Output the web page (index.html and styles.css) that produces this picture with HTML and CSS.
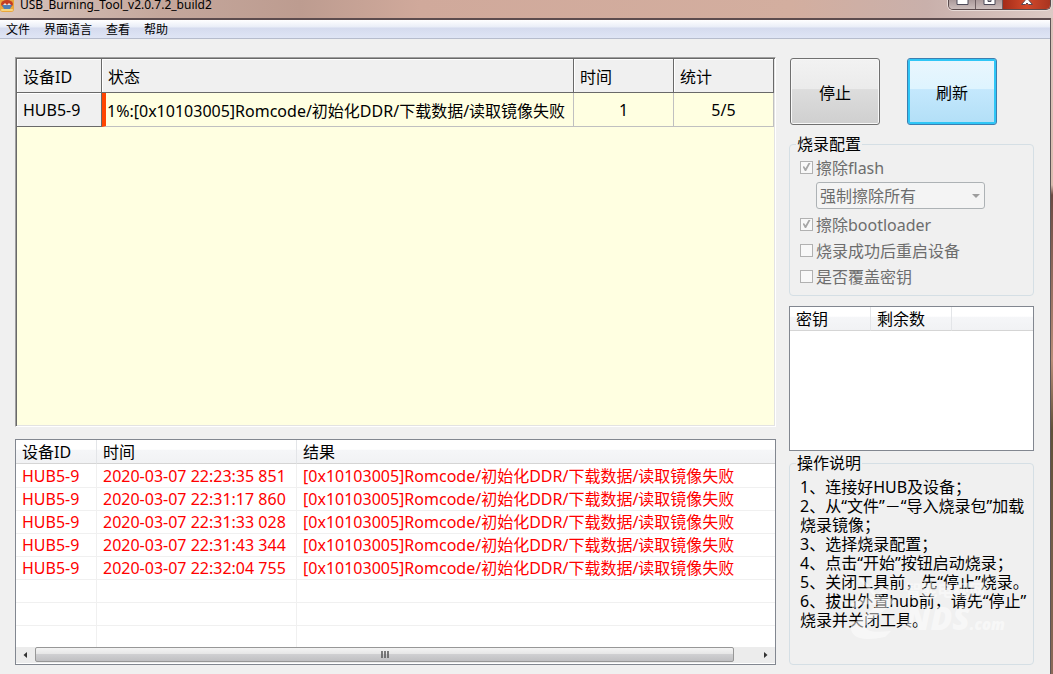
FILE: index.html
```
<!DOCTYPE html>
<html lang="zh-CN">
<head>
  <meta charset="UTF-8" />
  <meta name="viewport" content="width=device-width, initial-scale=1.0"/>
  <title>USB_Burning_Tool_v2.0.7.2_build2</title>
  <link rel="stylesheet" href="styles.css">
</head>
<body>

  <header class="titlebar">
    <svg class="app-icon" width="14" height="13" viewBox="0 0 14 13">
      <rect x="0" y="-3" width="14" height="15" rx="3" fill="#e9a63c"/>
      <rect x="1" y="9" width="12" height="2" rx="1" fill="#f7d47e"/>
      <ellipse cx="7" cy="4" rx="6" ry="4" fill="#c43c22"/>
      <path d="M2 5h10l-2 4H4z" fill="#4f7fb5"/>
      <path d="M3 5l2-2 2 2 2-2 2 2z" fill="#f3e3d4"/>
    </svg>
    <span class="title">USB_Burning_Tool_v2.0.7.2_build2</span>
    <div class="window-btns">
      <button class="win-btn" aria-label="最小化">
        <svg width="13" height="6" viewBox="0 0 13 6"><path d="M1 0v4.500h11V0" fill="#fff" stroke="#4d4a58"/></svg>
      </button>
      <button class="win-btn" aria-label="最大化">
        <svg width="13" height="6" viewBox="0 0 13 6"><path d="M1 -1v5.500h11V-1z" fill="#fff" stroke="#4d4a58"/><path d="M5 -1v2.500h3V-1z" fill="#aaa" stroke="#4d4a58"/></svg>
      </button>
      <button class="win-btn close" aria-label="关闭">
        <svg width="14" height="6" viewBox="0 0 14 6"><path d="M5 -1h4v1.500L12.500 4.500h-4L7 3 5.500 4.500h-4L5 0.500z" fill="#fff" stroke="#5b4650"/></svg>
      </button>
    </div>
  </header>

  <div class="window">
    <nav class="menubar">
      <button>文件</button>
      <button>界面语言</button>
      <button>查看</button>
      <button>帮助</button>
    </nav>

    <main class="content">
      <div class="left">
        <div class="device-panel">
          <table class="device-table">
            <colgroup><col class="col-hub"><col><col class="col-num"><col class="col-num"></colgroup>
            <thead>
              <tr><th>设备ID</th><th>状态</th><th>时间</th><th>统计</th></tr>
            </thead>
            <tbody>
              <tr>
                <th>HUB5-9</th>
                <td class="status">1%:[0x10103005]Romcode/初始化DDR/下载数据/读取镜像失败</td>
                <td class="num">1</td>
                <td class="num">5/5</td>
              </tr>
            </tbody>
          </table>
        </div>

        <div class="log-panel">
          <div class="log-scroll">
            <table class="log-table">
              <colgroup><col class="col-id"><col class="col-time"><col></colgroup>
              <thead>
                <tr><th>设备ID</th><th>时间</th><th>结果</th></tr>
              </thead>
              <tbody>
                <tr><td>HUB5-9</td><td>2020-03-07 22:23:35 851</td><td>[0x10103005]Romcode/初始化DDR/下载数据/读取镜像失败</td></tr>
                <tr><td>HUB5-9</td><td>2020-03-07 22:31:17 860</td><td>[0x10103005]Romcode/初始化DDR/下载数据/读取镜像失败</td></tr>
                <tr><td>HUB5-9</td><td>2020-03-07 22:31:33 028</td><td>[0x10103005]Romcode/初始化DDR/下载数据/读取镜像失败</td></tr>
                <tr><td>HUB5-9</td><td>2020-03-07 22:31:43 344</td><td>[0x10103005]Romcode/初始化DDR/下载数据/读取镜像失败</td></tr>
                <tr><td>HUB5-9</td><td>2020-03-07 22:32:04 755</td><td>[0x10103005]Romcode/初始化DDR/下载数据/读取镜像失败</td></tr>
                <tr><td></td><td></td><td></td></tr>
                <tr><td></td><td></td><td></td></tr>
                <tr><td></td><td></td><td></td></tr>
              </tbody>
            </table>
          </div>
          <div class="scrollbar">
            <button class="arrow" aria-label="向左滚动"><svg width="5" height="8" viewBox="0 0 5 8"><path d="M4 1v6L0.500 4z" fill="#333"/></svg></button>
            <div class="track">
              <div class="thumb"><svg width="8" height="7" viewBox="0 0 8 7"><path d="M1 0v7M4 0v7M7 0v7" stroke="#555" stroke-width="1.500"/></svg></div>
            </div>
            <button class="arrow" aria-label="向右滚动"><svg width="5" height="8" viewBox="0 0 5 8"><path d="M1 1v6l3.500-3z" fill="#333"/></svg></button>
          </div>
        </div>
      </div>

      <aside class="right">
        <div class="actions">
          <button class="btn">停止</button>
          <button class="btn focus">刷新</button>
        </div>

        <fieldset class="group config">
          <legend>烧录配置</legend>
          <label class="check"><input type="checkbox" checked disabled>擦除flash</label>
          <div class="select-wrap">
            <select aria-label="擦除方式" disabled>
              <option>强制擦除所有</option>
            </select>
            <svg class="caret" width="8" height="4" viewBox="0 0 8 4"><path d="M0 0h8L4 4z" fill="#9d9d9d"/></svg>
          </div>
          <label class="check"><input type="checkbox" checked disabled>擦除bootloader</label>
          <label class="check"><input type="checkbox" disabled>烧录成功后重启设备</label>
          <label class="check"><input type="checkbox" disabled>是否覆盖密钥</label>
        </fieldset>

        <div class="key-panel">
          <table class="key-table">
            <colgroup><col class="col-key"><col class="col-key"><col></colgroup>
            <thead>
              <tr><th>密钥</th><th>剩余数</th><th></th></tr>
            </thead>
          </table>
        </div>

        <fieldset class="group help">
          <legend>操作说明</legend>
          <p>1、连接好HUB及设备；</p>
          <p>2、从“文件”－“导入烧录包”加载烧录镜像；</p>
          <p>3、选择烧录配置；</p>
          <p>4、点击“开始”按钮启动烧录；</p>
          <p>5、关闭工具前，先“停止”烧录。</p>
          <p>6、拔出外置hub前，请先“停止”烧录并关闭工具。</p>
          <div class="watermark">
            <svg class="mark-logo" width="60" height="66" viewBox="0 0 60 66">
              <path d="M15 2l16 18M46 10L32 20" fill="none" stroke="#fff" stroke-width="3"/>
              <path d="M6 28q22-12 46-4L20 50q0 8 26 5l-6 6Q4 68 6 49l27-20q-20-3-25 5z" fill="#fff"/>
            </svg>
            <div class="mark-text">
              <span class="mark-cn">智能电视网</span>
              <span class="mark-en">NDS<small>.com</small></span>
            </div>
          </div>
        </fieldset>
      </aside>
    </main>
  </div>

</body>
</html>
```
FILE: styles.css
```
* {
  box-sizing: border-box;
}

body {
  margin: 0;
  height: 100vh;
  display: flex;
  flex-direction: column;
  overflow: hidden;
  background: linear-gradient(#d9c4bc 0, #d9bcae 185px, #6b4a42 195px, #b98e78 360px, #5f5038 430px, #8c6a58 100%);
  color: #000;
  font-family: "Noto Sans", "Noto Sans CJK SC", sans-serif;
  font-size: 16px;
}

button, select {
  font-family: inherit;
  color: inherit;
}

/* title bar */
.titlebar {
  flex: none;
  display: flex;
  align-items: flex-start;
  height: 18px;
  padding-right: 2px;
  background: linear-gradient(90deg, #d8c5bd 0, #c4a79c 160px, #bd9c90 300px, #d0a99b 420px, #d3ae9f 75%, #c9b0ab 88%, #dccac5 100%);
}

.title {
  flex: 1;
  padding-left: 6px;
  font-size: 12px;
  line-height: 10px;
}

.window-btns {
  display: flex;
  border: 1px solid #5a4a4c;
  border-top: 0;
  border-radius: 0 0 5px 5px;
  box-shadow: 0 0 0 1px #e9dcd8;
  overflow: hidden;
}

.win-btn {
  display: flex;
  justify-content: center;
  align-items: flex-start;
  width: 27px;
  height: 9px;
  padding: 0;
  border: 0;
  border-right: 1px solid #6d5e61;
  background: linear-gradient(#ab9a9b, #cbbdbb);
}

.win-btn.close {
  width: 47px;
  border-right: 0;
  background: linear-gradient(90deg, #a52c18, #d2492b 50%, #a93420);
}

/* window body */
.window {
  flex: 1;
  min-height: 0;
  display: flex;
  flex-direction: column;
  margin-right: 2px;
  border-top: 2px solid #5d4c4e;
  border-right: 1px solid #5d5557;
  background: #f0f0f0;
}

.menubar {
  flex: none;
  display: flex;
  gap: 14px;
  height: 19px;
  padding-left: 6px;
  border-bottom: 1px solid #b6bccc;
  background: linear-gradient(#fff 0, #e9edf7 7px, #d5dbee 8px, #dfe5f5 100%);
}

.menubar button {
  padding: 0;
  border: 0;
  background: none;
  font-size: 12px;
  line-height: 19px;
}

.content {
  flex: 1;
  min-height: 0;
  display: grid;
  grid-template-columns: 1fr 245px;
  gap: 13px;
  padding: 18px 16px 9px 15px;
}

.left {
  min-width: 0;
  min-height: 0;
  display: flex;
  flex-direction: column;
  gap: 12px;
}

table {
  width: 100%;
  table-layout: fixed;
  border-collapse: separate;
  border-spacing: 0;
}

th, td {
  padding: 0 6px;
  font-weight: normal;
  text-align: left;
  white-space: nowrap;
}

/* device grid */
.device-panel {
  flex: 1;
  min-height: 0;
  border: 1px solid #a0a0a0;
  border-right-color: #fff;
  border-bottom-color: #fff;
  background: #ffffe1;
  box-shadow: inset 1px 1px #696969, inset -1px -1px #e3e3e3;
  padding: 1px;
}

.col-hub {
  width: 85px;
}

.col-num {
  width: 100px;
}

.device-table th {
  height: 34px;
  border-right: 1px solid #696969;
  border-bottom: 1px solid #696969;
  background: #f0f0f0;
  box-shadow: inset 1px 1px #fff;
}

.device-table td {
  height: 34px;
  border-right: 1px solid #c0c0c0;
  border-bottom: 1px solid #c0c0c0;
}

.device-table .status {
  padding: 0 0 0 1px;
  border-left: 4px solid #ff4500;
}

.device-table .num {
  text-align: center;
}

/* burning log */
.log-panel {
  flex: none;
  display: flex;
  flex-direction: column;
  height: 226px;
  padding-bottom: 1px;
  border: 1px solid #828790;
  background: #fff;
}

.log-scroll {
  flex: 1;
  min-height: 0;
  overflow: hidden;
}

.col-id {
  width: 81px;
}

.col-time {
  width: 200px;
}

.log-table th, .key-table th {
  height: 24px;
  line-height: 22px;
  border-right: 1px solid #e3e5e8;
  border-bottom: 1px solid #d5d5d5;
  background: linear-gradient(#fff 40%, #f5f6f8 45%, #f1f2f4);
}

.log-table th:last-child, .key-table th:last-child {
  border-right: 0;
}

.log-table td {
  height: 23px;
  line-height: 22px;
  border-right: 1px solid #f0f0f0;
  border-bottom: 1px solid #f0f0f0;
  color: #f00;
}

.log-table tbody tr:first-child td {
  height: 24px;
  padding-top: 1px;
}

.log-table td:last-child {
  border-right: 0;
}

.scrollbar {
  flex: none;
  display: flex;
  height: 16px;
  background: #ececec;
}

.arrow {
  display: flex;
  align-items: center;
  justify-content: center;
  width: 19px;
  padding: 0;
  border: 0;
  background: none;
}

.track {
  flex: 1;
}

.thumb {
  display: flex;
  align-items: center;
  justify-content: center;
  width: 97%;
  height: 15px;
  border: 1px solid #979797;
  border-radius: 2px;
  background: linear-gradient(#f4f4f4, #e6e6e6 45%, #cfcfd1 50%, #bfbfc2);
}

/* right column */
.right {
  min-height: 0;
  display: flex;
  flex-direction: column;
}

.actions {
  display: flex;
  gap: 27px;
  padding: 1px 1px 0;
  margin-bottom: 9px;
}

.btn {
  width: 90px;
  height: 67px;
  padding: 0;
  border: 1px solid #707070;
  border-radius: 3px;
  background: linear-gradient(#f2f2f2, #ebebeb 46%, #dddddd 47%, #cfcfcf);
  box-shadow: inset 0 0 0 1px #f8f8f8;
  font-size: 16px;
}

.btn.focus {
  border-color: #3c7fb1;
  background: linear-gradient(#eaf6fd, #def4fe 46%, #c4e8fd 47%, #b2dff7);
  box-shadow: inset 0 0 0 2px #2fc6f6;
}

.group {
  position: relative;
  min-width: 0;
  margin: 0;
  padding: 2px 3px 8px 10px;
  border: 1px solid #d5dfe5;
  border-radius: 4px;
  box-shadow: none;
}

.group legend {
  margin-left: -4px;
  padding: 0 1px;
  line-height: 20px;
}

.config {
  margin-bottom: 10px;
  color: #6d6d6d;
}

.config legend {
  color: #000;
}

.check {
  display: flex;
  align-items: center;
  gap: 3px;
  height: 22px;
  margin-bottom: 4px;
}

.check:last-child {
  margin-bottom: 0;
}

.check input {
  appearance: none;
  display: flex;
  align-items: center;
  justify-content: center;
  width: 13px;
  height: 13px;
  margin: 0;
  border: 1px solid #b1b1b1;
  background: #f8f8f8;
}

.check input:checked::before {
  content: "";
  width: 8px;
  height: 8px;
  background: #a6a6a6;
  clip-path: polygon(0 45%, 20% 40%, 38% 65%, 75% 0, 100% 0, 45% 100%, 30% 100%);
}

.select-wrap {
  display: flex;
  align-items: center;
  width: 169px;
  height: 27px;
  margin: 0 0 4px 16px;
  padding-right: 4px;
  border: 1px solid #adb2b5;
  border-radius: 3px;
  background: #f4f4f4;
}

.select-wrap select {
  appearance: none;
  flex: 1;
  padding: 0 3px;
  border: 0;
  background: none;
  font-size: 16px;
  opacity: 1;
}

.key-panel {
  flex: none;
  height: 145px;
  border: 1px solid #828790;
  background: #fff;
}

.col-key {
  width: 81px;
}

.help {
  flex: 1;
  margin-top: 2px;
  padding-top: 5px;
}

.help p {
  margin: 0;
  line-height: 19px;
}

/* site watermark lying over the help text */
.watermark {
  position: absolute;
  right: 28px;
  bottom: 22px;
  display: flex;
  align-items: flex-end;
  color: #fff;
  opacity: 0.5;
  pointer-events: none;
}

.mark-text {
  display: flex;
  flex-direction: column;
}

.mark-cn {
  font-size: 16px;
  font-weight: bold;
  line-height: 20px;
}

.mark-en {
  font-size: 32px;
  font-style: italic;
  font-weight: 900;
  line-height: 36px;
}

.mark-en small {
  font-size: 15px;
}
```
